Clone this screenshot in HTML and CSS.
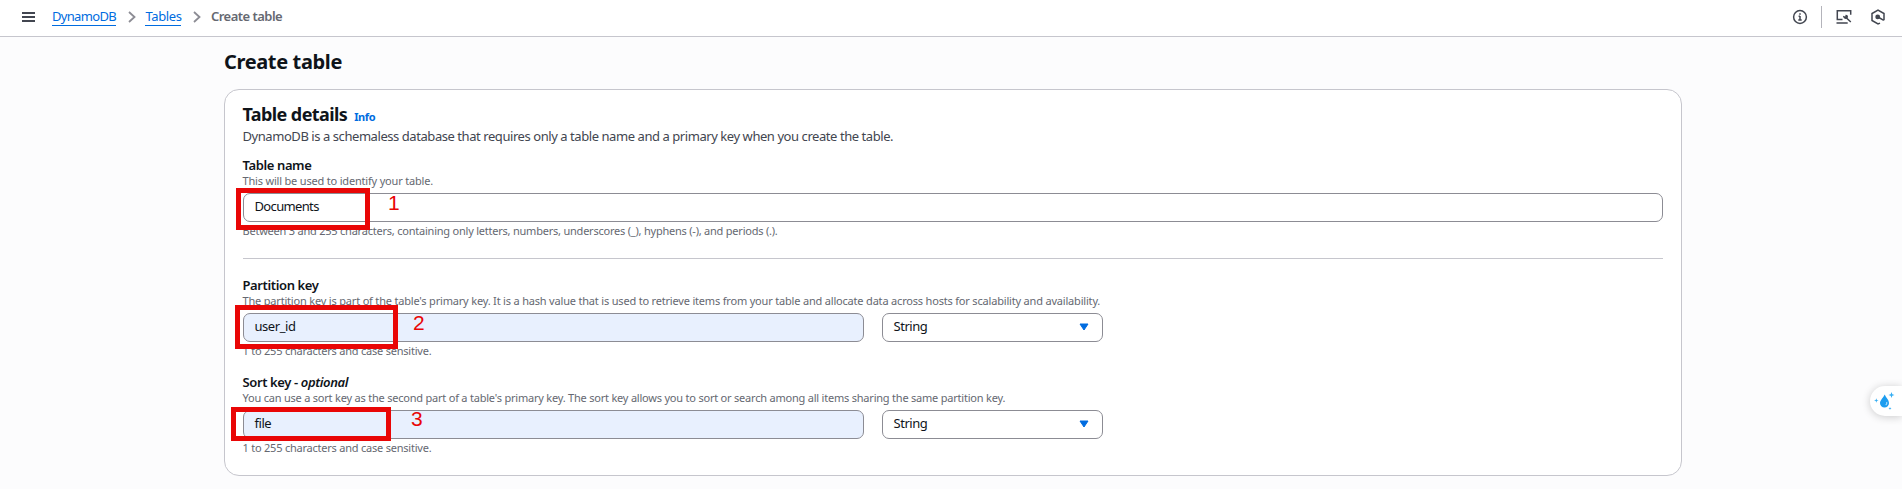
FILE: index.html
```html
<!DOCTYPE html>
<html lang="en">
<head>
<meta charset="utf-8">
<title>Create table</title>
<link rel="stylesheet" href="styles.css">
</head>
<body>
<header class="topbar">
  <svg class="menu" width="14" height="14" viewBox="0 0 14 14"><path d="M0 3h13M0 7h13M0 11h13"/></svg>
  <nav class="crumbs">
    <a class="crumb crumb-service">DynamoDB</a>
    <svg class="chevron" width="8" height="12" viewBox="0 0 8 12"><path d="M1 1l5.5 5L1 11"/></svg>
    <a class="crumb">Tables</a>
    <svg class="chevron" width="8" height="12" viewBox="0 0 8 12"><path d="M1 1l5.5 5L1 11"/></svg>
    <span class="current">Create table</span>
  </nav>
  <div class="tools">
    <svg width="16" height="16" viewBox="0 0 16 16"><circle cx="8" cy="8" r="6.4"/><path d="M8 7v4.2M6.6 7.2H8M6.3 11h3.4M8 4.2v1.6"/></svg>
    <span class="separator"></span>
    <svg class="tool-screen" width="16" height="16" viewBox="0 0 16 16"><path d="M6.500 10.500H1.300V1.800h13.400v4M.5 14.100h11.200M10.500 9l4.300 4"/><path class="solid" d="M7 6.800l2.200.8.400-1.900c1.800-.1 2.800 1.300 2.300 2.900l-1.600 1.500C8.500 10.300 7 8.800 7 6.800z"/></svg>
    <svg class="tool-hex" width="16" height="16" viewBox="0 0 16 16"><path d="M10 14.100L8 15 2 11.500v-7L8 1l6 3.500v6.800M8 8l5.800 3.400"/><circle class="solid" cx="7.700" cy="7.900" r="2.400"/></svg>
  </div>
</header>
<main class="page">
  <h1 class="title">Create table</h1>
  <section class="card">
    <div class="card-head"><h2 class="card-title">Table details</h2><a class="info">Info</a></div>
    <p class="card-text">DynamoDB is a schemaless database that requires only a table name and a primary key when you create the table.</p>
    <div class="field">
      <div class="label">Table name</div>
      <p class="hint">This will be used to identify your table.</p>
      <div class="control"><span class="value-name">Documents</span>
        <div class="mark mark-1"></div><span class="num num-1">1</span>
      </div>
      <p class="note">Between 3 and 255 characters, containing only letters, numbers, underscores (_), hyphens (-), and periods (.).</p>
    </div>
    <hr class="rule">
    <div class="field">
      <div class="label">Partition key</div>
      <p class="hint">The partition key is part of the table's primary key. It is a hash value that is used to retrieve items from your table and allocate data across hosts for scalability and availability.</p>
      <div class="row">
        <div class="control filled">user_id
          <div class="mark mark-2"></div><span class="num num-2">2</span>
        </div>
        <div class="control select">String<svg width="10" height="8" viewBox="0 0 10 8"><path d="M1 1h8L5 7z"/></svg></div>
      </div>
      <p class="note">1 to 255 characters and case sensitive.</p>
    </div>
    <div class="field field-sort">
      <div class="label">Sort key - <i>optional</i></div>
      <p class="hint hint-sort">You can use a sort key as the second part of a table's primary key. The sort key allows you to sort or search among all items sharing the same partition key.</p>
      <div class="row">
        <div class="control filled">file
          <div class="mark mark-3"></div><span class="num num-3">3</span>
        </div>
        <div class="control select">String<svg width="10" height="8" viewBox="0 0 10 8"><path d="M1 1h8L5 7z"/></svg></div>
      </div>
      <p class="note">1 to 255 characters and case sensitive.</p>
    </div>
  </section>
</main>
<div class="assistant">
  <svg width="24" height="24" viewBox="0 0 24 24"><path d="M12.700 4.500c1.200 3 4.300 5.500 4.300 8.600a4.500 4.500 0 0 1-9 0C8 10.300 11.500 7.500 12.700 4.500z"/><path class="spark" d="M19.500 2l.8 2.200 2.200.8-2.200.8-.8 2.200-.8-2.200-2.200-.8 2.200-.8zM4.300 8.200l.6 1.700 1.700.6-1.700.6-.6 1.700-.6-1.700-1.700-.6 1.700-.6zM18 17l.4 1.100 1.100.4-1.100.4-.4 1.100-.4-1.100-1.100-.4 1.100-.4z"/><path class="glint" d="M14.700 12q.5 2-1 3"/></svg>
</div>
</body>
</html>
```
FILE: styles.css
```css
* { box-sizing: border-box; }
body {
  margin: 0;
  height: 489px;
  overflow: hidden;
  background: #fcfcfd;
  color: #0f141a;
  font: 13px/18px "Noto Sans", "Open Sans", sans-serif;
  letter-spacing: -0.43px;
}
h1, h2, p { margin: 0; }

.topbar {
  display: flex;
  align-items: center;
  height: 37px;
  padding: 0 16.500px 3px 22px;
  background: #fff;
  border-bottom: 1px solid #c6c6cd;
}
svg { display: block; flex: none; fill: none; stroke: #424650; stroke-width: 1.5; }
.menu { margin: 1px 16px 0 0; stroke-width: 1.800; }
.crumbs { display: flex; align-items: center; }
.crumb { color: #006ce0; height: 17px; line-height: 15px; border-bottom: 1px solid #006ce0; letter-spacing: -0.4px; margin-top: 1px; }
.crumb-service { letter-spacing: -0.68px; }
.chevron { margin: 1px 9.500px 0 12px; stroke: #8c8c94; stroke-width: 1.800; }
.current { margin-top: -1px; color: #656871; font-weight: 600; letter-spacing: -0.52px; }
.tools { display: flex; align-items: center; margin: 1px 0 0 auto; }
.separator { width: 1px; height: 22px; margin: 0 14px 0 13px; background: #b4b4bb; }
.tool-hex { margin-left: 18px; }
.solid { fill: #424650; stroke: none; }

.page { width: 1458px; margin-left: 224px; padding-top: 11px; }
.title { font-size: 20px; line-height: 27px; font-weight: 700; letter-spacing: -0.36px; }
.card {
  height: 387px;
  margin-top: 14px;
  padding: 12px 18px 0;
  background: #fff;
  border: 1px solid #c6c6cd;
  border-radius: 15px;
}
.card-head { display: flex; align-items: baseline; gap: 7px; height: 24px; }
.card-title { font-size: 18px; line-height: 25px; font-weight: 700; letter-spacing: -0.59px; }
.info { color: #006ce0; font-size: 11px; font-weight: 700; letter-spacing: -0.4px; }
.card-text { line-height: 20px; margin-bottom: 10px; color: #424650; letter-spacing: -0.437px; }
.field { margin-top: 9px; }
.label { font-weight: 600; line-height: 18px; letter-spacing: -0.38px; }
.hint, .note { font-size: 11px; color: #656871; letter-spacing: -0.187px; white-space: nowrap; }
.hint { line-height: 14px; }
.hint-sort { letter-spacing: -0.213px; }
.note { line-height: 16px; margin-top: 1px; letter-spacing: -0.222px; }
.card-head, .card-text, .label, .hint, .note { margin-left: -0.5px; }
.row { display: grid; grid-template-columns: 621px 221px; gap: 18px; }
.control {
  position: relative;
  height: 29px;
  margin-top: 5px;
  padding: 0 11px 0 10.500px;
  line-height: 25px;
  background: #fff;
  border: 1px solid #8c8c94;
  border-radius: 7px;
  letter-spacing: -0.45px;
}
.value-name { letter-spacing: -0.65px; }
.filled { background: #e8f0fe; }
.select { display: flex; justify-content: space-between; }
.select svg { margin: 9px 2px 0 0; fill: #006ce0; stroke: #006ce0; stroke-width: 1; stroke-linejoin: round; }
.rule { height: 1px; margin: 19px 0 17px; border: 0; background: #c6c6cd; }
.field-sort { margin-top: 14px; }
.card-text + .field, .rule + .field { margin-top: 0; }

.mark { position: absolute; border: 5px solid #e90606; }
.mark-1 { left: -8px; top: -6px; width: 134px; height: 42px; }
.mark-2 { left: -9px; top: -9px; width: 163px; height: 44px; }
.mark-3 { left: -13px; top: -4px; width: 160px; height: 34px; }
.num { position: absolute; font: 21px/24px "Liberation Sans", Arial, sans-serif; color: #e90606; letter-spacing: 0; }
.num-1 { left: 144px; top: -3px; }
.num-2 { left: 169px; top: -3px; }
.num-3 { left: 167px; top: -4px; }

.assistant {
  position: absolute;
  right: 0;
  top: 386px;
  width: 32px;
  height: 30px;
  padding: 4px 0 0 2px;
  background: #fff;
  border-radius: 15px 0 0 15px;
  box-shadow: 0 1px 8px rgba(0, 0, 0, 0.2);
}
.assistant svg { fill: #1c9df0; stroke: none; }
.assistant .spark { fill: #35aef3; }
.assistant .glint { fill: none; stroke: #a9dcfb; stroke-width: 1.200; }
```
